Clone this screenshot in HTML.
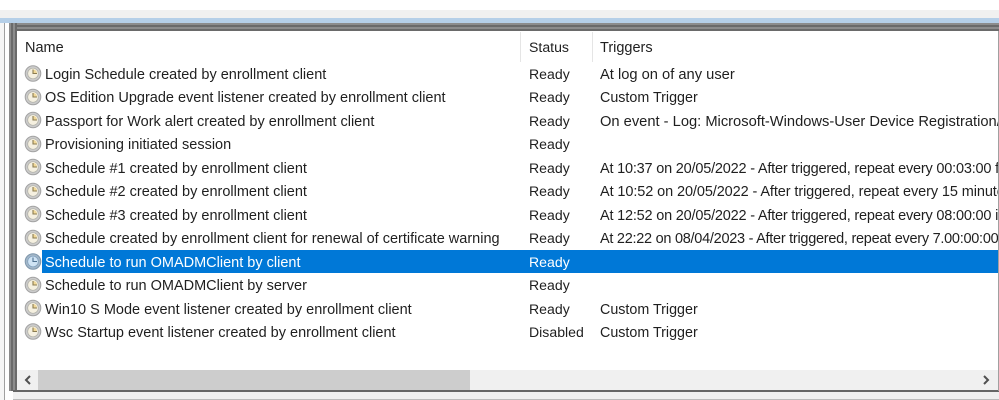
<!DOCTYPE html>
<html><head><meta charset="utf-8"><style>
html,body{margin:0;padding:0;background:#fff}
#p{position:relative;width:999px;height:400px;overflow:hidden;background:#fff;font-family:"Liberation Sans",sans-serif;font-size:14.5px;color:#1f1f1f}
#p div{position:absolute}
.t{white-space:nowrap;line-height:20px;height:20px}
.s{font-size:14.1px}
.c{font-size:14.3px}
svg{position:absolute;left:0;top:0}
</style></head><body><div id="p">
<div style="left:0;top:10px;width:999px;height:8px;background:#f0f0f0"></div>
<div style="left:0;top:18px;width:999px;height:5px;background:#b5cfe8"></div>
<div style="left:0;top:23px;width:4px;height:377px;background:#f6f6f6"></div>
<div style="left:4px;top:23px;width:1px;height:377px;background:#a0a0a0"></div>
<div style="left:5px;top:23px;width:4px;height:377px;background:#fff"></div>
<div style="left:9px;top:23px;width:990px;height:8px;background:repeating-linear-gradient(#8c8c8c 0,#8c8c8c 2px,#6a6a6a 2px,#6a6a6a 4px)"></div>
<div style="left:9px;top:23px;width:8px;height:368px;background:repeating-linear-gradient(90deg,#8c8c8c 0,#8c8c8c 2px,#6a6a6a 2px,#6a6a6a 4px)"></div>
<div style="left:17px;top:31px;width:982px;height:339px;background:#fff"></div>
<div style="left:520px;top:32px;width:1px;height:30px;background:#e5e5e5"></div>
<div style="left:592px;top:32px;width:1px;height:30px;background:#e5e5e5"></div>
<div style="left:42px;top:250px;width:957px;height:23px;background:#0078d7"></div>
<div style="left:17px;top:370px;width:981px;height:20px;background:#f0f0f0"></div>
<div style="left:38px;top:370px;width:432px;height:20px;background:#cdcdcd"></div>
<div style="left:13px;top:390px;width:986px;height:2px;background:#666"></div>
<div style="left:13px;top:392px;width:986px;height:7px;background:#f0f0f0"></div>
<div style="left:13px;top:399px;width:986px;height:1px;background:#bbb"></div>
<svg width="999" height="400" fill="none">
<defs><g id="c"><circle r="7.8" fill="#cbcbcb" stroke="#a3a3a3"/><circle r="5.3" fill="#f5f0e0" stroke="#b0b0a8" stroke-width=".7"/><path d="M0-4V0H4A4 4 0 0 0 0-4Z" fill="#f0d898"/><path d="M0-4V0H4" stroke="#8a7c52" stroke-width="1.1"/></g>
<g id="d"><circle r="7.8" fill="#a2b6c8" stroke="#7f97ac"/><circle r="5.3" fill="#cfe3f4" stroke="#7f9fbc" stroke-width=".7"/><path d="M0-4V0H4" stroke="#4f7290" stroke-width="1.1"/></g></defs>
<use href="#c" x="33" y="73.5"/><use href="#c" x="33" y="97"/><use href="#c" x="33" y="120"/><use href="#c" x="33" y="144"/><use href="#c" x="33" y="167"/><use href="#c" x="33" y="191"/><use href="#c" x="33" y="214"/><use href="#c" x="33" y="238"/><use href="#d" x="33" y="261.5"/><use href="#c" x="33" y="285"/><use href="#c" x="33" y="308"/><use href="#c" x="33" y="331.5"/>
<path d="M30 376l-4 4 4 4" stroke="#505050" stroke-width="2"/><path d="M984 376l4 4-4 4" stroke="#505050" stroke-width="2"/>
</svg>
<div class="t" style="left:25px;top:38px">Name</div><div class="t s" style="left:529px;top:37px">Status</div><div class="t" style="left:600px;top:38px">Triggers</div>
<div class="t" style="left:45px;top:65px">Login Schedule created by enrollment client</div><div class="t s" style="left:529px;top:64px">Ready</div><div class="t" style="left:600px;top:65px;font-size:14.7px">At log on of any user</div>
<div class="t" style="left:45px;top:88px">OS Edition Upgrade event listener created by enrollment client</div><div class="t s" style="left:529px;top:87px">Ready</div><div class="t c" style="left:600px;top:88px">Custom Trigger</div>
<div class="t" style="left:45px;top:112px">Passport for Work alert created by enrollment client</div><div class="t s" style="left:529px;top:111px">Ready</div><div class="t" style="left:600px;top:112px;font-size:14.7px">On event - Log: Microsoft-Windows-User Device Registration/Admin</div>
<div class="t" style="left:45px;top:135px">Provisioning initiated session</div><div class="t s" style="left:529px;top:134px">Ready</div>
<div class="t" style="left:45px;top:159px">Schedule #1 created by enrollment client</div><div class="t s" style="left:529px;top:158px">Ready</div><div class="t" style="left:600px;top:159px;letter-spacing:-.2px">At 10:37 on 20/05/2022 - After triggered, repeat every 00:03:00 for</div>
<div class="t" style="left:45px;top:182px">Schedule #2 created by enrollment client</div><div class="t s" style="left:529px;top:181px">Ready</div><div class="t" style="left:600px;top:182px;letter-spacing:-.1px">At 10:52 on 20/05/2022 - After triggered, repeat every 15 minutes</div>
<div class="t" style="left:45px;top:206px">Schedule #3 created by enrollment client</div><div class="t s" style="left:529px;top:205px">Ready</div><div class="t" style="left:600px;top:206px;letter-spacing:-.2px">At 12:52 on 20/05/2022 - After triggered, repeat every 08:00:00 in</div>
<div class="t" style="left:45px;top:229px">Schedule created by enrollment client for renewal of certificate warning</div><div class="t s" style="left:529px;top:228px">Ready</div><div class="t" style="left:600px;top:229px;letter-spacing:-.27px">At 22:22 on 08/04/2023 - After triggered, repeat every 7.00:00:00</div>
<div class="t" style="left:45px;top:253px;color:#fff">Schedule to run OMADMClient by client</div><div class="t s" style="left:529px;top:252px;color:#fff">Ready</div>
<div class="t" style="left:45px;top:276px">Schedule to run OMADMClient by server</div><div class="t s" style="left:529px;top:275px">Ready</div>
<div class="t" style="left:45px;top:300px">Win10 S Mode event listener created by enrollment client</div><div class="t s" style="left:529px;top:299px">Ready</div><div class="t c" style="left:600px;top:300px">Custom Trigger</div>
<div class="t" style="left:45px;top:323px">Wsc Startup event listener created by enrollment client</div><div class="t s" style="left:529px;top:322px">Disabled</div><div class="t c" style="left:600px;top:323px">Custom Trigger</div>
<div style="left:998px;top:31px;width:1px;height:360px;background:#a0a0a0"></div>
</div></body></html>
